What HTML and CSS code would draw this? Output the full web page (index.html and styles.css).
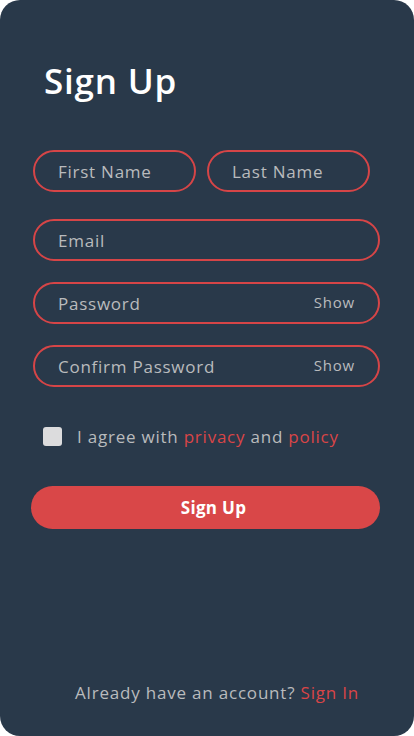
FILE: index.html
```html
<!DOCTYPE html>
<html lang="en">
<head>
<meta charset="utf-8">
<title>Sign Up</title>
<link rel="stylesheet" href="styles.css">
</head>
<body>
<main class="card">
  <h1 class="title">Sign Up</h1>
  <form class="form">
    <div class="row names">
      <div class="field half"><span class="ph">First Name</span></div>
      <div class="field half"><span class="ph">Last Name</span></div>
    </div>
    <div class="field wide email"><span class="ph">Email</span></div>
    <div class="field wide pw"><span class="ph">Password</span><span class="show">Show</span></div>
    <div class="field wide pw"><span class="ph">Confirm Password</span><span class="show">Show</span></div>
    <label class="agree"><span class="box"></span><span>I agree with <span class="red">privacy</span> and <span class="red">policy</span></span></label>
    <button type="button" class="btn">Sign Up</button>
  </form>
  <p class="footer">Already have an account? <span class="red">Sign In</span></p>
</main>
</body>
</html>
```
FILE: styles.css
```css
html, body {
  margin: 0;
  padding: 0;
  background: #ffffff;
}
body {
  font-family: "Open Sans", "Noto Sans", sans-serif;
}
.card {
  width: 414px;
  height: 736px;
  box-sizing: border-box;
  background: #29394a;
  border-radius: 20px;
  display: flex;
  flex-direction: column;
  padding: 0 34px 0 33px;
}
.title {
  margin: 59px 0 0 11px;
  font-size: 35px;
  letter-spacing: 0.8px;
  line-height: 44px;
  font-weight: 600;
  color: #ffffff;
}
.form {
  display: flex;
  flex-direction: column;
  margin-top: 47px;
}
.row {
  display: flex;
  gap: 11px;
  width: 337px;
}
.field {
  height: 42px;
  box-sizing: border-box;
  border: 2px solid #d64547;
  border-radius: 21px;
  display: flex;
  align-items: center;
  justify-content: space-between;
  padding: 0 23px 0 23px;
  color: #b9bbbd;
  flex: none;
}
.half {
  flex: 1;
}
.wide {
  width: 347px;
}
.ph {
  font-size: 17px;
  letter-spacing: 0.75px;
}
.email { margin-top: 27px; }
.pw { margin-top: 21px; }
.show {
  font-size: 15px;
  letter-spacing: 0.8px;
  margin-top: -3px;
}
.agree {
  display: flex;
  align-items: center;
  gap: 15px;
  margin: 38px 0 0 10px;
  color: #b9bbbd;
  font-size: 17px;
  letter-spacing: 0.77px;
}
.box {
  width: 19px;
  height: 19px;
  border-radius: 3px;
  background: #dcdcdd;
  flex: none;
}
.red { color: #d94547; }
.btn {
  margin: 38px 0 0 -2px;
  width: 349px;
  height: 43px;
  border: none;
  border-radius: 22px;
  background: #d94748;
  color: #ffffff;
  font-family: inherit;
  font-size: 17px;
  letter-spacing: 0.3px;
  font-weight: 700;
  padding: 0 0 0 16px;
}
.footer {
  margin: auto 0 32px 0;
  padding-left: 42px;
  color: #b9bbbd;
  font-size: 17px;
  letter-spacing: 0.8px;
  line-height: 22px;
}
```
